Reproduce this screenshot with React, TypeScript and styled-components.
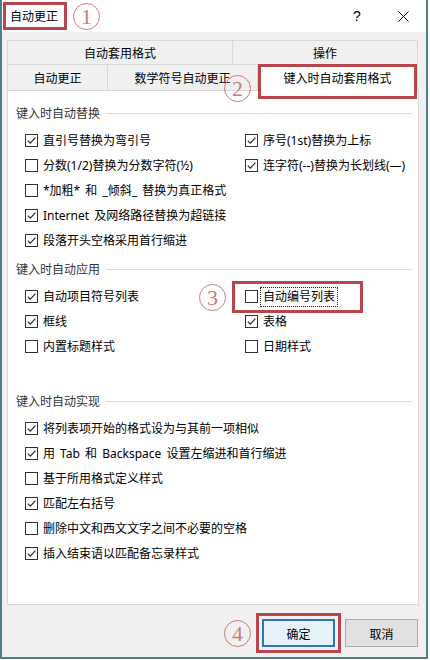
import React from 'react';
import styled, { createGlobalStyle } from 'styled-components';

const GlobalStyle = createGlobalStyle`
  body {
    margin: 0;
    background: #ffffff;
    font-family: "Noto Sans", "Noto Sans CJK SC", sans-serif;
  }
`;

const RED = '#b8464c';
const PINK = '#cf7a7a';

const Window = styled.div`
  width: 428px;
  height: 659px;
  box-sizing: border-box;
  border: 2px solid #4f7d8a;
  border-top: none;
  background: #f0f0f0;
  display: flex;
  flex-direction: column;
  font-size: 12px;
  line-height: 16px;
  color: #000;
`;

const TitleBar = styled.div`
  height: 32px;
  flex: none;
  background: #ffffff;
  display: flex;
  align-items: center;
`;

const TitleBox = styled.div`
  margin-left: 1px;
  height: 28px;
  box-sizing: border-box;
  border: 3px solid ${RED};
  padding: 0 6px 0 4px;
  display: flex;
  align-items: center;
  font-family: "Noto Sans CJK SC", sans-serif;
`;

// circled annotation number: thin ring with a serif digit
const CircleNum = styled.span<{ $gap?: number }>`
  display: inline-flex;
  align-items: center;
  justify-content: center;
  width: 27px;
  height: 27px;
  box-sizing: border-box;
  border: 1.3px solid ${PINK};
  border-radius: 50%;
  margin-left: ${p => p.$gap ?? 0}px;
  color: ${PINK};
  font-family: "Liberation Serif", serif;
  font-size: 22px;
  line-height: 1;
  padding-top: 1px;
`;

const FloatNum = styled(CircleNum)<{ $x: number; $y: number }>`
  position: absolute;
  left: ${p => p.$x}px;
  top: ${p => p.$y}px;
  z-index: 3;
`;

const Spacer = styled.div`
  flex: 1;
`;

const CaptionButton = styled.div`
  width: 46px;
  height: 32px;
  display: flex;
  align-items: center;
  justify-content: center;
  font-family: "Liberation Sans", sans-serif;
  font-size: 14px;
`;

const Body = styled.div`
  flex: 1;
  display: flex;
  flex-direction: column;
  padding: 8px 7px 0 5px;
  position: relative;
`;

const TabRow = styled.div<{ $h: number; $front?: boolean }>`
  display: flex;
  align-items: flex-start;
  height: ${p => p.$h}px;
  position: relative;
  z-index: ${p => (p.$front ? 2 : 1)};
`;

const Tab = styled.div<{ $w: number; $active?: boolean; $last?: boolean; $h: number }>`
  width: ${p => p.$w}px;
  height: ${p => (p.$active ? p.$h + 1 : p.$h)}px;
  box-sizing: border-box;
  border-top: 1px solid #d9d9d9;
  border-left: 1px solid #d9d9d9;
  border-right: ${p => (p.$last ? '1px solid #d9d9d9' : 'none')};
  background: ${p => (p.$active ? '#ffffff' : '#f0f0f0')};
  display: flex;
  align-items: center;
  justify-content: center;
  padding-bottom: ${p => (p.$active ? 1 : 0)}px;
  font-family: "Noto Sans CJK SC", sans-serif;
  position: relative;

  ${p =>
    p.$active &&
    `
    &::after {
      content: '';
      position: absolute;
      left: 0;
      right: 0;
      top: -1px;
      bottom: -8px;
      border: 3px solid ${RED};
    }
  `}
`;

const Panel = styled.div`
  height: 515px;
  flex: none;
  box-sizing: border-box;
  background: #ffffff;
  border: 1px solid #d9d9d9;
  padding: 14px 6px 0 8px;
  display: flex;
  flex-direction: column;
  gap: 8px;
`;

const Section = styled.section<{ $extra?: number }>`
  margin-bottom: ${p => p.$extra ?? 0}px;
`;

const SectionTitle = styled.div`
  display: flex;
  align-items: center;
  height: 16px;
  color: #333;
  font-family: "Noto Sans CJK SC", sans-serif;

  &::after {
    content: '';
    flex: 1;
    margin-left: 6px;
    border-top: 1px solid #dcdcdc;
  }
`;

const Rows = styled.div`
  margin-top: 7px;
  padding-left: 9px;
`;

const Row = styled.div`
  display: grid;
  grid-template-columns: 220px 1fr;
  height: 25px;
  align-items: center;
`;

const Cell = styled.div`
  display: flex;
  align-items: center;
  position: relative;
  height: 25px;
`;

const Box = styled.span`
  width: 13px;
  height: 13px;
  box-sizing: border-box;
  border: 1px solid #333;
  background: #fff;
  display: inline-flex;
  align-items: center;
  justify-content: center;
  flex: none;
`;

const Label = styled.span<{ $focus?: boolean }>`
  margin-left: 4px;
  padding: 0 1px;
  white-space: nowrap;
  word-spacing: 2px;
  outline: ${p => (p.$focus ? '1px dotted #222' : 'none')};
  outline-offset: 1px;
`;

const Highlight = styled.div<{ $x: number; $y: number; $w: number; $h: number }>`
  position: absolute;
  left: ${p => p.$x}px;
  top: ${p => p.$y}px;
  width: ${p => p.$w}px;
  height: ${p => p.$h}px;
  box-sizing: border-box;
  border: 3px solid ${RED};
  pointer-events: none;
`;

const Footer = styled.div`
  display: flex;
  justify-content: flex-end;
  align-items: center;
  padding: 8px 1px 0 0;
`;

const RedWrap = styled.div`
  border: 3px solid ${RED};
  padding: 3px;
  margin-left: 5px;
`;

const Button = styled.button<{ $primary?: boolean }>`
  width: 73px;
  height: 28px;
  box-sizing: border-box;
  margin: 0;
  border: ${p => (p.$primary ? '2px solid #2f74b5' : '1px solid #adadad')};
  background: ${p => (p.$primary ? '#e5f1fb' : '#e1e1e1')};
  font-family: "Noto Sans CJK SC", sans-serif;
  font-size: 12px;
  color: #000;
  padding: 0;
`;

const CancelButton = styled(Button)`
  margin-left: 4px;
`;

type Item = { t: string; c: boolean; focus?: boolean; mark?: boolean };

const Check: React.FC<{ on: boolean }> = ({ on }) => (
  <Box>
    {on && (
      <svg width="11" height="11" viewBox="0 0 11 11">
        <path d="M1.8 5.6 L4.3 8.1 L9.4 2.6" fill="none" stroke="#222" strokeWidth="1.1" />
      </svg>
    )}
  </Box>
);

const Option: React.FC<{ item?: Item }> = ({ item }) => {
  if (!item) return <Cell />;
  return (
    <Cell>
      {item.mark && (
        <>
          <FloatNum $x={-46} $y={0}>3</FloatNum>
          <Highlight $x={-13} $y={-3} $w={131} $h={32} />
        </>
      )}
      <Check on={item.c} />
      <Label $focus={item.focus}>{item.t}</Label>
    </Cell>
  );
};

const sections: { title: string; extra?: number; rows: Item[][] }[] = [
  {
    title: '键入时自动替换',
    rows: [
      [{ t: '直引号替换为弯引号', c: true }, { t: '序号(1st)替换为上标', c: true }],
      [{ t: '分数(1/2)替换为分数字符(½)', c: false }, { t: '连字符(--)替换为长划线(—)', c: true }],
      [{ t: '*加粗* 和 _倾斜_ 替换为真正格式', c: false }],
      [{ t: 'Internet 及网络路径替换为超链接', c: true }],
      [{ t: '段落开头空格采用首行缩进', c: true }],
    ],
  },
  {
    title: '键入时自动应用',
    extra: 26,
    rows: [
      [{ t: '自动项目符号列表', c: true }, { t: '自动编号列表', c: false, focus: true, mark: true }],
      [{ t: '框线', c: true }, { t: '表格', c: true }],
      [{ t: '内置标题样式', c: false }, { t: '日期样式', c: false }],
    ],
  },
  {
    title: '键入时自动实现',
    rows: [
      [{ t: '将列表项开始的格式设为与其前一项相似', c: true }],
      [{ t: '用 Tab 和 Backspace 设置左缩进和首行缩进', c: true }],
      [{ t: '基于所用格式定义样式', c: false }],
      [{ t: '匹配左右括号', c: true }],
      [{ t: '删除中文和西文文字之间不必要的空格', c: false }],
      [{ t: '插入结束语以匹配备忘录样式', c: true }],
    ],
  },
];

const App: React.FC = () => {
  return (
    <>
      <GlobalStyle />
      <Window>
        <TitleBar>
          <TitleBox>自动更正</TitleBox>
          <CircleNum $gap={6}>1</CircleNum>
          <Spacer />
          <CaptionButton>?</CaptionButton>
          <CaptionButton>
            <svg width="11" height="11" viewBox="0 0 11 11">
              <path d="M0.5 0.5 L10.5 10.5 M10.5 0.5 L0.5 10.5" stroke="#000" strokeWidth="1" />
            </svg>
          </CaptionButton>
        </TitleBar>
        <Body>
          <FloatNum $x={222} $y={43}>2</FloatNum>
          <TabRow $h={24}>
            <Tab $w={225} $h={24}>自动套用格式</Tab>
            <Tab $w={186} $h={24} $last>操作</Tab>
          </TabRow>
          <TabRow $h={26} $front>
            <Tab $w={100} $h={26}>自动更正</Tab>
            <Tab $w={150} $h={26}>数学符号自动更正</Tab>
            <Tab $w={161} $h={26} $last $active>键入时自动套用格式</Tab>
          </TabRow>
          <Panel>
            {sections.map(s => (
              <Section key={s.title} $extra={s.extra}>
                <SectionTitle>{s.title}</SectionTitle>
                <Rows>
                  {s.rows.map((r, i) => (
                    <Row key={i}>
                      <Option item={r[0]} />
                      <Option item={r[1]} />
                    </Row>
                  ))}
                </Rows>
              </Section>
            ))}
          </Panel>
          <Footer>
            <CircleNum>4</CircleNum>
            <RedWrap>
              <Button $primary>确定</Button>
            </RedWrap>
            <CancelButton>取消</CancelButton>
          </Footer>
        </Body>
      </Window>
    </>
  );
};

export default App;
